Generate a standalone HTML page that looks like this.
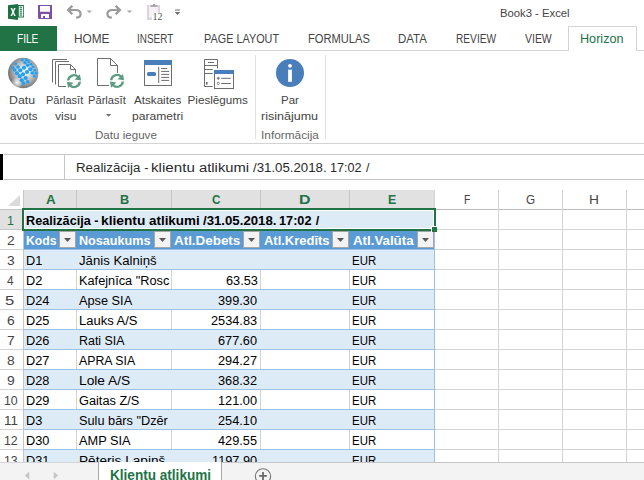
<!DOCTYPE html>
<html><head><meta charset="utf-8"><style>
*{margin:0;padding:0}
html,body{width:644px;height:480px;overflow:hidden;background:#fff}
body{position:relative;font-family:"Liberation Sans",sans-serif}
.a{position:absolute}
.tx{position:absolute;white-space:pre;transform-origin:0 0}
</style></head><body>
<div class="a" style="left:0px;top:26px;width:57px;height:25px;background:#217346;"></div><div class="a" style="left:57px;top:50px;width:587px;height:1px;background:#d4d4d4;"></div><div class="a" style="left:568px;top:26px;width:69px;height:25px;background:#fff;box-sizing:border-box;border:1px solid #d4d4d4;border-bottom:none"></div><div class="a" style="left:255px;top:55px;width:1px;height:84px;background:#e1e1e1;"></div><div class="a" style="left:325px;top:55px;width:1px;height:84px;background:#e1e1e1;"></div><div class="a" style="left:0px;top:143px;width:644px;height:1px;background:#d4d4d4;"></div><div class="a" style="left:4px;top:154px;width:640px;height:1px;background:#c6c6c6;"></div><div class="a" style="left:4px;top:179px;width:640px;height:1px;background:#c6c6c6;"></div><div class="a" style="left:0px;top:154px;width:3px;height:26px;background:#000;"></div><div class="a" style="left:64px;top:154px;width:1px;height:25px;background:#c6c6c6;"></div><div class="a" style="left:24px;top:190px;width:411px;height:18px;background:#e1e1e1;"></div><div class="a" style="left:435px;top:209px;width:209px;height:1px;background:#bcbcbc;"></div><div class="a" style="left:23px;top:190px;width:1px;height:18px;background:#c6c6c6;"></div><div class="a" style="left:76px;top:190px;width:1px;height:18px;background:#c6c6c6;"></div><div class="a" style="left:171px;top:190px;width:1px;height:18px;background:#c6c6c6;"></div><div class="a" style="left:260px;top:190px;width:1px;height:18px;background:#c6c6c6;"></div><div class="a" style="left:349px;top:190px;width:1px;height:18px;background:#c6c6c6;"></div><div class="a" style="left:434px;top:190px;width:1px;height:19px;background:#d4d4d4;"></div><div class="a" style="left:498px;top:190px;width:1px;height:19px;background:#d4d4d4;"></div><div class="a" style="left:562px;top:190px;width:1px;height:19px;background:#d4d4d4;"></div><div class="a" style="left:626px;top:190px;width:1px;height:19px;background:#d4d4d4;"></div><svg class="a" style="left:0;top:190px" width="23" height="19"><polygon points="8,16 20,16 20,5" fill="#dadada"/></svg><div class="a" style="left:0px;top:209px;width:22px;height:1px;background:#c6c6c6;"></div><div class="a" style="left:0px;top:210px;width:22px;height:19px;background:#e1e1e1;"></div><div class="a" style="left:0px;top:229px;width:22px;height:1px;background:#c6c6c6;"></div><div class="a" style="left:23px;top:231px;width:1px;height:231px;background:#c6c6c6;"></div><div class="a" style="left:0px;top:249px;width:23px;height:1px;background:#d4d4d4;"></div><div class="a" style="left:0px;top:269px;width:23px;height:1px;background:#d4d4d4;"></div><div class="a" style="left:0px;top:289px;width:23px;height:1px;background:#d4d4d4;"></div><div class="a" style="left:0px;top:309px;width:23px;height:1px;background:#d4d4d4;"></div><div class="a" style="left:0px;top:329px;width:23px;height:1px;background:#d4d4d4;"></div><div class="a" style="left:0px;top:349px;width:23px;height:1px;background:#d4d4d4;"></div><div class="a" style="left:0px;top:369px;width:23px;height:1px;background:#d4d4d4;"></div><div class="a" style="left:0px;top:389px;width:23px;height:1px;background:#d4d4d4;"></div><div class="a" style="left:0px;top:409px;width:23px;height:1px;background:#d4d4d4;"></div><div class="a" style="left:0px;top:429px;width:23px;height:1px;background:#d4d4d4;"></div><div class="a" style="left:0px;top:449px;width:23px;height:1px;background:#d4d4d4;"></div><div class="a" style="left:0px;top:469px;width:23px;height:1px;background:#d4d4d4;"></div><div class="a" style="left:435px;top:229px;width:209px;height:1px;background:#d4d4d4;"></div><div class="a" style="left:435px;top:249px;width:209px;height:1px;background:#d4d4d4;"></div><div class="a" style="left:435px;top:269px;width:209px;height:1px;background:#d4d4d4;"></div><div class="a" style="left:435px;top:289px;width:209px;height:1px;background:#d4d4d4;"></div><div class="a" style="left:435px;top:309px;width:209px;height:1px;background:#d4d4d4;"></div><div class="a" style="left:435px;top:329px;width:209px;height:1px;background:#d4d4d4;"></div><div class="a" style="left:435px;top:349px;width:209px;height:1px;background:#d4d4d4;"></div><div class="a" style="left:435px;top:369px;width:209px;height:1px;background:#d4d4d4;"></div><div class="a" style="left:435px;top:389px;width:209px;height:1px;background:#d4d4d4;"></div><div class="a" style="left:435px;top:409px;width:209px;height:1px;background:#d4d4d4;"></div><div class="a" style="left:435px;top:429px;width:209px;height:1px;background:#d4d4d4;"></div><div class="a" style="left:435px;top:449px;width:209px;height:1px;background:#d4d4d4;"></div><div class="a" style="left:435px;top:469px;width:209px;height:1px;background:#d4d4d4;"></div><div class="a" style="left:498px;top:209px;width:1px;height:253px;background:#d4d4d4;"></div><div class="a" style="left:562px;top:209px;width:1px;height:253px;background:#d4d4d4;"></div><div class="a" style="left:626px;top:209px;width:1px;height:253px;background:#d4d4d4;"></div><div class="a" style="left:24px;top:231px;width:410px;height:18px;background:#5b9bd5;"></div><div class="a" style="left:24px;top:249px;width:410px;height:1px;background:#9bc2e6;"></div><div class="a" style="left:24px;top:250px;width:410px;height:19px;background:#ddebf7;"></div><div class="a" style="left:24px;top:269px;width:410px;height:1px;background:#9bc2e6;"></div><div class="a" style="left:76px;top:270px;width:1px;height:19px;background:#d4d4d4;"></div><div class="a" style="left:171px;top:270px;width:1px;height:19px;background:#d4d4d4;"></div><div class="a" style="left:260px;top:270px;width:1px;height:19px;background:#d4d4d4;"></div><div class="a" style="left:349px;top:270px;width:1px;height:19px;background:#d4d4d4;"></div><div class="a" style="left:24px;top:289px;width:410px;height:1px;background:#9bc2e6;"></div><div class="a" style="left:24px;top:290px;width:410px;height:19px;background:#ddebf7;"></div><div class="a" style="left:24px;top:309px;width:410px;height:1px;background:#9bc2e6;"></div><div class="a" style="left:76px;top:310px;width:1px;height:19px;background:#d4d4d4;"></div><div class="a" style="left:171px;top:310px;width:1px;height:19px;background:#d4d4d4;"></div><div class="a" style="left:260px;top:310px;width:1px;height:19px;background:#d4d4d4;"></div><div class="a" style="left:349px;top:310px;width:1px;height:19px;background:#d4d4d4;"></div><div class="a" style="left:24px;top:329px;width:410px;height:1px;background:#9bc2e6;"></div><div class="a" style="left:24px;top:330px;width:410px;height:19px;background:#ddebf7;"></div><div class="a" style="left:24px;top:349px;width:410px;height:1px;background:#9bc2e6;"></div><div class="a" style="left:76px;top:350px;width:1px;height:19px;background:#d4d4d4;"></div><div class="a" style="left:171px;top:350px;width:1px;height:19px;background:#d4d4d4;"></div><div class="a" style="left:260px;top:350px;width:1px;height:19px;background:#d4d4d4;"></div><div class="a" style="left:349px;top:350px;width:1px;height:19px;background:#d4d4d4;"></div><div class="a" style="left:24px;top:369px;width:410px;height:1px;background:#9bc2e6;"></div><div class="a" style="left:24px;top:370px;width:410px;height:19px;background:#ddebf7;"></div><div class="a" style="left:24px;top:389px;width:410px;height:1px;background:#9bc2e6;"></div><div class="a" style="left:76px;top:390px;width:1px;height:19px;background:#d4d4d4;"></div><div class="a" style="left:171px;top:390px;width:1px;height:19px;background:#d4d4d4;"></div><div class="a" style="left:260px;top:390px;width:1px;height:19px;background:#d4d4d4;"></div><div class="a" style="left:349px;top:390px;width:1px;height:19px;background:#d4d4d4;"></div><div class="a" style="left:24px;top:409px;width:410px;height:1px;background:#9bc2e6;"></div><div class="a" style="left:24px;top:410px;width:410px;height:19px;background:#ddebf7;"></div><div class="a" style="left:24px;top:429px;width:410px;height:1px;background:#9bc2e6;"></div><div class="a" style="left:76px;top:430px;width:1px;height:19px;background:#d4d4d4;"></div><div class="a" style="left:171px;top:430px;width:1px;height:19px;background:#d4d4d4;"></div><div class="a" style="left:260px;top:430px;width:1px;height:19px;background:#d4d4d4;"></div><div class="a" style="left:349px;top:430px;width:1px;height:19px;background:#d4d4d4;"></div><div class="a" style="left:24px;top:449px;width:410px;height:1px;background:#9bc2e6;"></div><div class="a" style="left:24px;top:450px;width:410px;height:19px;background:#ddebf7;"></div><div class="a" style="left:24px;top:469px;width:410px;height:1px;background:#9bc2e6;"></div><div class="a" style="left:434px;top:231px;width:1px;height:231px;background:#9bc2e6;"></div><div class="a" style="left:59px;top:231px;width:15px;height:15px;background:#f3f3f3;border:1px solid #a6a6a6"></div><svg class="a" style="left:64px;top:238px" width="7" height="4"><polygon points="0,0 7,0 3.5,4" fill="#595959"/></svg><div class="a" style="left:154px;top:231px;width:15px;height:15px;background:#f3f3f3;border:1px solid #a6a6a6"></div><svg class="a" style="left:159px;top:238px" width="7" height="4"><polygon points="0,0 7,0 3.5,4" fill="#595959"/></svg><div class="a" style="left:243px;top:231px;width:15px;height:15px;background:#f3f3f3;border:1px solid #a6a6a6"></div><svg class="a" style="left:248px;top:238px" width="7" height="4"><polygon points="0,0 7,0 3.5,4" fill="#595959"/></svg><div class="a" style="left:332px;top:231px;width:15px;height:15px;background:#f3f3f3;border:1px solid #a6a6a6"></div><svg class="a" style="left:337px;top:238px" width="7" height="4"><polygon points="0,0 7,0 3.5,4" fill="#595959"/></svg><div class="a" style="left:417px;top:231px;width:15px;height:15px;background:#f3f3f3;border:1px solid #a6a6a6"></div><svg class="a" style="left:422px;top:238px" width="7" height="4"><polygon points="0,0 7,0 3.5,4" fill="#595959"/></svg><div class="a" style="left:22px;top:208px;width:414px;height:23px;background:#217346;"></div><div class="a" style="left:24px;top:210px;width:410px;height:19px;background:#fff;"></div><div class="a" style="left:25px;top:211px;width:408px;height:17px;background:#ddebf7;"></div><div class="a" style="left:431px;top:226px;width:6px;height:6px;background:#fff;"></div><div class="a" style="left:432px;top:227px;width:5px;height:5px;background:#217346;"></div>
<svg class="a" style="left:0;top:0" width="644" height="480"><polygon points="8,5.2 18,4 18,20 8,18.8" fill="#1e7145"/><rect x="18" y="5" width="6" height="12.5" fill="#1e7145"/><rect x="18.8" y="6" width="4.4" height="10.5" fill="#fff"/><rect x="19.6" y="6.7" width="2.5" height="1.1" fill="#1e7145"/><rect x="19.6" y="8.7" width="2.5" height="1.1" fill="#1e7145"/><rect x="19.6" y="10.6" width="2.5" height="1.1" fill="#1e7145"/><rect x="19.6" y="12.6" width="2.5" height="1.1" fill="#1e7145"/><rect x="19.6" y="14.5" width="2.5" height="1.1" fill="#1e7145"/><path d="M10.6,8.1 L12.2,8.1 L13.1,10.6 L14.0,8.1 L15.6,8.1 L13.9,12.0 L15.7,15.9 L14.1,15.9 L13.1,13.3 L12.1,15.9 L10.5,15.9 L12.3,12.0 Z" fill="#fff"/><path d="M38,5 H52 V19 H39 L38,18 Z M40,6 V11.8 H50 V6 Z M41,14 V18 H43 V16 H45 V18 H49 V14 Z" fill="#7e4fa8" fill-rule="evenodd"/><path d="M69.5,10 H75.5 C78.8,10 80.6,11.8 80.6,14 C80.6,16.2 78.8,17.6 76.2,17.6" fill="none" stroke="#9b9b9b" stroke-width="2.2"/><polygon points="66.5,10 71.5,5 73.2,6.6 69.8,10 73.2,13.4 71.5,15" fill="#9b9b9b"/><polygon points="86.5,10.5 92,10.5 89.25,13" fill="#a6a6a6"/><path d="M118.5,10 H112.5 C109.2,10 107.4,11.8 107.4,14 C107.4,16.2 109.2,17.6 111.8,17.6" fill="none" stroke="#9b9b9b" stroke-width="2.2"/><polygon points="121.5,10 116.5,5 114.8,6.6 118.2,10 114.8,13.4 116.5,15" fill="#9b9b9b"/><polygon points="126.8,10.5 132.2,10.5 129.5,13" fill="#a6a6a6"/><rect x="147" y="5" width="13" height="15" fill="#dcd4dc"/><rect x="149" y="6" width="9" height="11.5" fill="#f6f1f6"/><polygon points="150,6.8 151,5.2 152.8,5.2 153.4,4 154.6,4 155.2,5.2 157,5.2 158,6.8" fill="#9a9a9a"/><rect x="152" y="12.8" width="11" height="8" fill="#fff"/><text x="152.6" y="19.8" font-family="Liberation Serif" font-size="10" fill="#555">12</text><rect x="175" y="9.5" width="5" height="1" fill="#6d6d6d"/><polygon points="174.8,12 180.2,12 177.5,15" fill="#6d6d6d"/><defs>
<radialGradient id="gl" cx="0.55" cy="0.45" r="0.6">
 <stop offset="0" stop-color="#ffffff"/>
 <stop offset="0.25" stop-color="#e6e6e6"/>
 <stop offset="0.6" stop-color="#b0b0b0"/>
 <stop offset="0.88" stop-color="#7a7a7a"/>
 <stop offset="1" stop-color="#8e8e8e"/>
</radialGradient>
<radialGradient id="gl2" cx="0.3" cy="0.82" r="0.2">
 <stop offset="0" stop-color="#ffffff" stop-opacity="0.9"/>
 <stop offset="1" stop-color="#ffffff" stop-opacity="0"/>
</radialGradient>
<clipPath id="gc"><circle cx="23.2" cy="73" r="15.2"/></clipPath>
</defs><circle cx="23.2" cy="73" r="15.2" fill="url(#gl)"/><circle cx="23.2" cy="73" r="15.2" fill="url(#gl2)"/><ellipse cx="22.30" cy="60.00" rx="1.52" ry="1.45" fill="#22a2f4"/><ellipse cx="26.30" cy="59.70" rx="1.52" ry="1.45" fill="#22a2f4"/><ellipse cx="25.00" cy="62.70" rx="1.84" ry="1.75" fill="#22a2f4"/><ellipse cx="28.70" cy="61.70" rx="1.52" ry="1.45" fill="#22a2f4"/><ellipse cx="27.70" cy="65.30" rx="1.84" ry="1.75" fill="#22a2f4"/><ellipse cx="31.00" cy="64.30" rx="1.52" ry="1.45" fill="#22a2f4"/><ellipse cx="15.70" cy="64.00" rx="1.52" ry="1.45" fill="#22a2f4"/><ellipse cx="18.00" cy="67.00" rx="1.84" ry="1.75" fill="#22a2f4"/><ellipse cx="12.70" cy="67.70" rx="1.52" ry="1.45" fill="#22a2f4"/><ellipse cx="24.00" cy="67.70" rx="2.10" ry="2.00" fill="#22a2f4"/><ellipse cx="33.00" cy="67.00" rx="1.52" ry="1.45" fill="#22a2f4"/><ellipse cx="30.30" cy="69.30" rx="2.10" ry="2.00" fill="#22a2f4"/><ellipse cx="34.70" cy="70.30" rx="1.52" ry="1.45" fill="#22a2f4"/><ellipse cx="14.70" cy="70.00" rx="1.84" ry="1.75" fill="#22a2f4"/><ellipse cx="20.30" cy="70.30" rx="2.10" ry="2.00" fill="#22a2f4"/><ellipse cx="27.00" cy="72.00" rx="2.10" ry="2.00" fill="#22a2f4"/><ellipse cx="32.30" cy="73.00" rx="1.84" ry="1.75" fill="#22a2f4"/><ellipse cx="36.00" cy="73.30" rx="1.52" ry="1.45" fill="#22a2f4"/><ellipse cx="17.00" cy="73.30" rx="2.10" ry="2.00" fill="#22a2f4"/><ellipse cx="23.00" cy="74.30" rx="2.10" ry="2.00" fill="#22a2f4"/><ellipse cx="34.30" cy="76.30" rx="1.52" ry="1.45" fill="#22a2f4"/><ellipse cx="19.70" cy="76.30" rx="2.10" ry="2.00" fill="#22a2f4"/><ellipse cx="25.70" cy="78.00" rx="2.10" ry="2.00" fill="#22a2f4"/><ellipse cx="21.70" cy="80.30" rx="2.10" ry="2.00" fill="#22a2f4"/><ellipse cx="27.70" cy="81.70" rx="1.84" ry="1.75" fill="#22a2f4"/><ellipse cx="23.30" cy="83.30" rx="1.84" ry="1.75" fill="#22a2f4"/><path d="M52.5,82.5 V59.5 H67" fill="none" stroke="#6d6d6d" stroke-width="1"/><path d="M55.5,84.5 V61.5 H69" fill="none" stroke="#6d6d6d" stroke-width="1"/><path d="M66,86.5 H58.5 V64.5 H70.5 L75.5,69.5 V74" fill="#fff" stroke="#6d6d6d" stroke-width="1"/><path d="M70.5,64.5 V69.5 H75.5" fill="none" stroke="#6d6d6d" stroke-width="1"/><circle cx="74" cy="81.3" r="8" fill="#fff"/><g transform="translate(74,81.2)"><path d="M-7,-0.6 A7,7 0 0 1 5.0,-4.9 L3.3,-3.4 A4.6,4.6 0 0 0 -4.6,-0.6 Z M5.9,-6.9 L7.1,-0.6 L0.6,-1.6 Z" fill="#5c9c84"/><g transform="rotate(180)"><path d="M-7,-0.6 A7,7 0 0 1 5.0,-4.9 L3.3,-3.4 A4.6,4.6 0 0 0 -4.6,-0.6 Z M5.9,-6.9 L7.1,-0.6 L0.6,-1.6 Z" fill="#5c9c84"/></g></g><path d="M109,85.5 H97.5 V58.5 H110.5 L117.5,65.5 V73" fill="#fff" stroke="#6d6d6d" stroke-width="1"/><path d="M110.5,58.5 V65.5 H117.5" fill="none" stroke="#6d6d6d" stroke-width="1"/><circle cx="117" cy="80.8" r="8" fill="#fff"/><g transform="translate(117,80.9)"><path d="M-7,-0.6 A7,7 0 0 1 5.0,-4.9 L3.3,-3.4 A4.6,4.6 0 0 0 -4.6,-0.6 Z M5.9,-6.9 L7.1,-0.6 L0.6,-1.6 Z" fill="#5c9c84"/><g transform="rotate(180)"><path d="M-7,-0.6 A7,7 0 0 1 5.0,-4.9 L3.3,-3.4 A4.6,4.6 0 0 0 -4.6,-0.6 Z M5.9,-6.9 L7.1,-0.6 L0.6,-1.6 Z" fill="#5c9c84"/></g></g><polygon points="106,114 111.2,114 108.6,116.8" fill="#6d6d6d"/><rect x="144.5" y="60.5" width="27" height="25" fill="#fff" stroke="#6d6d6d" stroke-width="1"/><rect x="144" y="60" width="28" height="5" fill="#4a7ebb"/><rect x="147" y="72" width="9" height="4" rx="1.5" fill="#4a7ebb"/><rect x="158.2" y="67" width="1" height="16" fill="#6d6d6d"/><rect x="161.2" y="68.0" width="6" height="1" fill="#6d6d6d"/><rect x="161.2" y="70.9" width="8" height="1" fill="#6d6d6d"/><rect x="161.2" y="73.9" width="8" height="1" fill="#6d6d6d"/><rect x="161.2" y="76.9" width="8" height="1" fill="#6d6d6d"/><rect x="161.2" y="79.9" width="8" height="1" fill="#6d6d6d"/><path d="M212.7,86.5 H204.5 V59.5 H217.5 V68.5" fill="none" stroke="#6d6d6d" stroke-width="1"/><rect x="204.5" y="65" width="13" height="1" fill="#6d6d6d"/><rect x="208" y="62" width="6" height="1" fill="#6d6d6d"/><rect x="204.5" y="69" width="8.2" height="1" fill="#6d6d6d"/><rect x="204.5" y="73" width="8.2" height="1" fill="#6d6d6d"/><rect x="206" y="82" width="1.6" height="2.6" fill="#6d6d6d"/><rect x="214.5" y="70.5" width="19" height="18" fill="#fff" stroke="#6d6d6d" stroke-width="1"/><rect x="214" y="70" width="20" height="4" fill="#4a7ebb"/><circle cx="218.3" cy="78.3" r="1.1" fill="#888" stroke="#6d6d6d" stroke-width="0.6"/><circle cx="218.3" cy="83.4" r="1.1" fill="#fff" stroke="#6d6d6d" stroke-width="0.8"/><rect x="221.2" y="77.8" width="9.6" height="1" fill="#6d6d6d"/><rect x="221.2" y="83" width="9.6" height="1" fill="#6d6d6d"/><circle cx="290" cy="73" r="14" fill="#4a7ebb"/><circle cx="290" cy="65.8" r="1.9" fill="#fff"/><rect x="288.1" y="69.6" width="3.8" height="12.2" fill="#fff"/></svg>
<div class="tx" style="left:499.94px;top:6.80px;font-size:11.7px;line-height:11.7px;color:#444;transform:scaleX(0.9648);">Book3 - Excel</div>
<div class="tx" style="left:16.99px;top:33.10px;font-size:12.5px;line-height:12.5px;color:#fff;transform:scaleX(0.8080);">FILE</div>
<div class="tx" style="left:73.76px;top:33.00px;font-size:12.5px;line-height:12.5px;color:#444;transform:scaleX(0.9444);">HOME</div>
<div class="tx" style="left:137.21px;top:33.00px;font-size:12.5px;line-height:12.5px;color:#444;transform:scaleX(0.7933);">INSERT</div>
<div class="tx" style="left:203.73px;top:33.00px;font-size:12.5px;line-height:12.5px;color:#444;transform:scaleX(0.8694);">PAGE LAYOUT</div>
<div class="tx" style="left:307.71px;top:33.00px;font-size:12.5px;line-height:12.5px;color:#444;transform:scaleX(0.8912);">FORMULAS</div>
<div class="tx" style="left:397.58px;top:33.00px;font-size:12.5px;line-height:12.5px;color:#444;transform:scaleX(0.9194);">DATA</div>
<div class="tx" style="left:455.89px;top:33.00px;font-size:12.5px;line-height:12.5px;color:#444;transform:scaleX(0.8125);">REVIEW</div>
<div class="tx" style="left:525.00px;top:33.00px;font-size:12.5px;line-height:12.5px;color:#444;transform:scaleX(0.8375);">VIEW</div>
<div class="tx" style="left:580.29px;top:33.00px;font-size:12.5px;line-height:12.5px;color:#217346;transform:scaleX(1.0098);">Horizon</div>
<div class="tx" style="left:9.45px;top:94.10px;font-size:11.7px;line-height:11.7px;color:#444;transform:scaleX(1.0522);">Datu</div>
<div class="tx" style="left:9.50px;top:109.70px;font-size:11.7px;line-height:11.7px;color:#444;transform:scaleX(0.9821);">avots</div>
<div class="tx" style="left:45.86px;top:94.10px;font-size:11.7px;line-height:11.7px;color:#444;transform:scaleX(0.9385);">Pārlasīt</div>
<div class="tx" style="left:54.90px;top:109.70px;font-size:11.7px;line-height:11.7px;color:#444;transform:scaleX(1.0400);">visu</div>
<div class="tx" style="left:88.45px;top:94.10px;font-size:11.7px;line-height:11.7px;color:#444;transform:scaleX(0.9538);">Pārlasīt</div>
<div class="tx" style="left:134.40px;top:94.10px;font-size:11.7px;line-height:11.7px;color:#444;transform:scaleX(0.9957);">Atskaites</div>
<div class="tx" style="left:131.96px;top:109.70px;font-size:11.7px;line-height:11.7px;color:#444;transform:scaleX(1.0354);">parametri</div>
<div class="tx" style="left:187.50px;top:94.10px;font-size:11.7px;line-height:11.7px;color:#444;">Pieslēgums</div>
<div class="tx" style="left:281.32px;top:94.40px;font-size:11.7px;line-height:11.7px;color:#444;transform:scaleX(0.9824);">Par</div>
<div class="tx" style="left:260.93px;top:109.70px;font-size:11.7px;line-height:11.7px;color:#444;transform:scaleX(1.0712);">risinājumu</div>
<div class="tx" style="left:94.91px;top:128.90px;font-size:11.7px;line-height:11.7px;color:#666;transform:scaleX(0.9918);">Datu ieguve</div>
<div class="tx" style="left:260.99px;top:128.70px;font-size:11.7px;line-height:11.7px;color:#666;transform:scaleX(1.0134);">Informācija</div>
<div class="tx" style="left:75.64px;top:161.80px;font-size:12.5px;line-height:12.5px;color:#2a2a2a;transform:scaleX(1.0633);">Realizācija</div>
<div class="tx" style="left:144.35px;top:161.80px;font-size:12.5px;line-height:12.5px;color:#2a2a2a;">-</div>
<div class="tx" style="left:151.49px;top:161.80px;font-size:12.5px;line-height:12.5px;color:#2a2a2a;transform:scaleX(1.2143);">klientu</div>
<div class="tx" style="left:199.30px;top:161.80px;font-size:12.5px;line-height:12.5px;color:#2a2a2a;transform:scaleX(1.1833);">atlikumi</div>
<div class="tx" style="left:252.70px;top:161.80px;font-size:12.5px;line-height:12.5px;color:#2a2a2a;transform:scaleX(1.0594);">/31.05.2018.</div>
<div class="tx" style="left:329.69px;top:161.80px;font-size:12.5px;line-height:12.5px;color:#2a2a2a;transform:scaleX(1.0100);">17:02</div>
<div class="tx" style="left:366.00px;top:161.80px;font-size:12.5px;line-height:12.5px;color:#2a2a2a;">/</div>
<div class="tx" style="left:45.80px;top:194.00px;font-size:12px;line-height:12px;color:#217346;font-weight:700;transform:scaleX(1.1125);">A</div>
<div class="tx" style="left:119.54px;top:194.00px;font-size:12px;line-height:12px;color:#217346;font-weight:700;transform:scaleX(1.0571);">B</div>
<div class="tx" style="left:212.20px;top:194.00px;font-size:12px;line-height:12px;color:#217346;font-weight:700;transform:scaleX(0.9750);">C</div>
<div class="tx" style="left:298.97px;top:194.00px;font-size:12px;line-height:12px;color:#217346;font-weight:700;transform:scaleX(1.3286);">D</div>
<div class="tx" style="left:387.77px;top:194.00px;font-size:12px;line-height:12px;color:#217346;font-weight:700;transform:scaleX(1.0286);">E</div>
<div class="tx" style="left:463.63px;top:194.00px;font-size:12px;line-height:12px;color:#444;transform:scaleX(0.8667);">F</div>
<div class="tx" style="left:526.00px;top:194.00px;font-size:12px;line-height:12px;color:#444;transform:scaleX(0.9778);">G</div>
<div class="tx" style="left:589.26px;top:194.00px;font-size:12px;line-height:12px;color:#444;transform:scaleX(1.1429);">H</div>
<div class="tx" style="left:6.76px;top:214.50px;font-size:12px;line-height:12px;color:#217346;transform:scaleX(1.0400);">1</div>
<div class="tx" style="left:6.70px;top:235.10px;font-size:12px;line-height:12px;color:#444;transform:scaleX(1.1500);">2</div>
<div class="tx" style="left:6.70px;top:255.10px;font-size:12px;line-height:12px;color:#444;transform:scaleX(1.1500);">3</div>
<div class="tx" style="left:6.70px;top:275.10px;font-size:12px;line-height:12px;color:#444;transform:scaleX(0.9857);">4</div>
<div class="tx" style="left:5.32px;top:295.10px;font-size:12px;line-height:12px;color:#444;transform:scaleX(1.3800);">5</div>
<div class="tx" style="left:6.70px;top:315.10px;font-size:12px;line-height:12px;color:#444;transform:scaleX(1.1500);">6</div>
<div class="tx" style="left:6.70px;top:335.10px;font-size:12px;line-height:12px;color:#444;transform:scaleX(1.1500);">7</div>
<div class="tx" style="left:6.70px;top:355.10px;font-size:12px;line-height:12px;color:#444;transform:scaleX(1.1500);">8</div>
<div class="tx" style="left:6.70px;top:375.10px;font-size:12px;line-height:12px;color:#444;transform:scaleX(1.1500);">9</div>
<div class="tx" style="left:4.17px;top:395.10px;font-size:12px;line-height:12px;color:#444;transform:scaleX(1.0250);">10</div>
<div class="tx" style="left:4.08px;top:415.10px;font-size:12px;line-height:12px;color:#444;transform:scaleX(1.1182);">11</div>
<div class="tx" style="left:4.17px;top:435.10px;font-size:12px;line-height:12px;color:#444;transform:scaleX(1.0250);">12</div>
<div class="tx" style="left:4.17px;top:455.10px;font-size:12px;line-height:12px;color:#444;transform:scaleX(1.0250);">13</div>
<div class="tx" style="left:25.69px;top:214.50px;font-size:12.5px;line-height:12.5px;color:#000;font-weight:700;transform:scaleX(1.0127);">Realizācija</div>
<div class="tx" style="left:94.25px;top:214.50px;font-size:12.5px;line-height:12.5px;color:#000;font-weight:700;">-</div>
<div class="tx" style="left:101.20px;top:214.50px;font-size:12.5px;line-height:12.5px;color:#000;font-weight:700;transform:scaleX(1.1000);">klientu</div>
<div class="tx" style="left:149.00px;top:214.50px;font-size:12.5px;line-height:12.5px;color:#000;font-weight:700;transform:scaleX(1.0723);">atlikumi</div>
<div class="tx" style="left:203.10px;top:214.50px;font-size:12.5px;line-height:12.5px;color:#000;font-weight:700;transform:scaleX(1.0565);">/31.05.2018.</div>
<div class="tx" style="left:279.38px;top:214.50px;font-size:12.5px;line-height:12.5px;color:#000;font-weight:700;transform:scaleX(1.0161);">17:02</div>
<div class="tx" style="left:315.85px;top:214.50px;font-size:12.5px;line-height:12.5px;color:#000;font-weight:700;">/</div>
<div class="tx" style="left:25.83px;top:234.60px;font-size:12.5px;line-height:12.5px;color:#fff;font-weight:700;transform:scaleX(0.9733);">Kods</div>
<div class="tx" style="left:78.89px;top:234.60px;font-size:12.5px;line-height:12.5px;color:#fff;font-weight:700;transform:scaleX(1.0100);">Nosaukums</div>
<div class="tx" style="left:174.40px;top:234.60px;font-size:12.5px;line-height:12.5px;color:#fff;font-weight:700;transform:scaleX(1.0721);">Atl.Debets</div>
<div class="tx" style="left:263.50px;top:234.60px;font-size:12.5px;line-height:12.5px;color:#fff;font-weight:700;transform:scaleX(1.0365);">Atl.Kredīts</div>
<div class="tx" style="left:352.70px;top:234.60px;font-size:12.5px;line-height:12.5px;color:#fff;font-weight:700;transform:scaleX(1.0632);">Atl.Valūta</div>
<div class="tx" style="left:25.60px;top:255.40px;font-size:12.5px;line-height:12.5px;color:#000;transform:scaleX(1.0200);">D1</div>
<div class="a" style="left:77px;top:249px;width:183px;height:20px;overflow:hidden"><div style="position:relative;left:-77px;top:-249px"><div class="tx" style="left:78.70px;top:255.40px;font-size:12.5px;line-height:12.5px;color:#000;transform:scaleX(1.0550);">Jānis Kalniņš</div></div></div>
<div class="tx" style="left:351.70px;top:255.40px;font-size:12.5px;line-height:12.5px;color:#000;transform:scaleX(0.9150);">EUR</div>
<div class="tx" style="left:25.60px;top:275.40px;font-size:12.5px;line-height:12.5px;color:#000;transform:scaleX(1.0200);">D2</div>
<div class="a" style="left:77px;top:269px;width:94px;height:20px;overflow:hidden"><div style="position:relative;left:-77px;top:-269px"><div class="tx" style="left:78.70px;top:275.40px;font-size:12.5px;line-height:12.5px;color:#000;transform:scaleX(1.0200);">Kafejnīca &quot;Rosc</div></div></div>
<div class="tx" style="left:225.58px;top:275.40px;font-size:12.5px;line-height:12.5px;color:#000;transform:scaleX(1.0200);">63.53</div>
<div class="tx" style="left:351.70px;top:275.40px;font-size:12.5px;line-height:12.5px;color:#000;transform:scaleX(0.9150);">EUR</div>
<div class="tx" style="left:25.60px;top:295.40px;font-size:12.5px;line-height:12.5px;color:#000;transform:scaleX(1.0200);">D24</div>
<div class="a" style="left:77px;top:289px;width:94px;height:20px;overflow:hidden"><div style="position:relative;left:-77px;top:-289px"><div class="tx" style="left:78.70px;top:295.40px;font-size:12.5px;line-height:12.5px;color:#000;transform:scaleX(1.0200);">Apse SIA</div></div></div>
<div class="tx" style="left:218.44px;top:295.40px;font-size:12.5px;line-height:12.5px;color:#000;transform:scaleX(1.0200);">399.30</div>
<div class="tx" style="left:351.70px;top:295.40px;font-size:12.5px;line-height:12.5px;color:#000;transform:scaleX(0.9150);">EUR</div>
<div class="tx" style="left:25.60px;top:315.40px;font-size:12.5px;line-height:12.5px;color:#000;transform:scaleX(1.0200);">D25</div>
<div class="a" style="left:77px;top:309px;width:94px;height:20px;overflow:hidden"><div style="position:relative;left:-77px;top:-309px"><div class="tx" style="left:78.70px;top:315.40px;font-size:12.5px;line-height:12.5px;color:#000;transform:scaleX(1.0400);">Lauks A/S</div></div></div>
<div class="tx" style="left:211.30px;top:315.40px;font-size:12.5px;line-height:12.5px;color:#000;transform:scaleX(1.0200);">2534.83</div>
<div class="tx" style="left:351.70px;top:315.40px;font-size:12.5px;line-height:12.5px;color:#000;transform:scaleX(0.9150);">EUR</div>
<div class="tx" style="left:25.60px;top:335.40px;font-size:12.5px;line-height:12.5px;color:#000;transform:scaleX(1.0200);">D26</div>
<div class="a" style="left:77px;top:329px;width:94px;height:20px;overflow:hidden"><div style="position:relative;left:-77px;top:-329px"><div class="tx" style="left:78.70px;top:335.40px;font-size:12.5px;line-height:12.5px;color:#000;transform:scaleX(0.9950);">Rati SIA</div></div></div>
<div class="tx" style="left:218.44px;top:335.40px;font-size:12.5px;line-height:12.5px;color:#000;transform:scaleX(1.0200);">677.60</div>
<div class="tx" style="left:351.70px;top:335.40px;font-size:12.5px;line-height:12.5px;color:#000;transform:scaleX(0.9150);">EUR</div>
<div class="tx" style="left:25.60px;top:355.40px;font-size:12.5px;line-height:12.5px;color:#000;transform:scaleX(1.0200);">D27</div>
<div class="a" style="left:77px;top:349px;width:94px;height:20px;overflow:hidden"><div style="position:relative;left:-77px;top:-349px"><div class="tx" style="left:78.70px;top:355.40px;font-size:12.5px;line-height:12.5px;color:#000;transform:scaleX(0.9850);">APRA SIA</div></div></div>
<div class="tx" style="left:218.44px;top:355.40px;font-size:12.5px;line-height:12.5px;color:#000;transform:scaleX(1.0200);">294.27</div>
<div class="tx" style="left:351.70px;top:355.40px;font-size:12.5px;line-height:12.5px;color:#000;transform:scaleX(0.9150);">EUR</div>
<div class="tx" style="left:25.60px;top:375.40px;font-size:12.5px;line-height:12.5px;color:#000;transform:scaleX(1.0200);">D28</div>
<div class="a" style="left:77px;top:369px;width:94px;height:20px;overflow:hidden"><div style="position:relative;left:-77px;top:-369px"><div class="tx" style="left:78.70px;top:375.40px;font-size:12.5px;line-height:12.5px;color:#000;transform:scaleX(1.1000);">Lole A/S</div></div></div>
<div class="tx" style="left:218.44px;top:375.40px;font-size:12.5px;line-height:12.5px;color:#000;transform:scaleX(1.0200);">368.32</div>
<div class="tx" style="left:351.70px;top:375.40px;font-size:12.5px;line-height:12.5px;color:#000;transform:scaleX(0.9150);">EUR</div>
<div class="tx" style="left:25.60px;top:395.40px;font-size:12.5px;line-height:12.5px;color:#000;transform:scaleX(1.0200);">D29</div>
<div class="a" style="left:77px;top:389px;width:94px;height:20px;overflow:hidden"><div style="position:relative;left:-77px;top:-389px"><div class="tx" style="left:78.70px;top:395.40px;font-size:12.5px;line-height:12.5px;color:#000;transform:scaleX(1.0200);">Gaitas Z/S</div></div></div>
<div class="tx" style="left:218.44px;top:395.40px;font-size:12.5px;line-height:12.5px;color:#000;transform:scaleX(1.0200);">121.00</div>
<div class="tx" style="left:351.70px;top:395.40px;font-size:12.5px;line-height:12.5px;color:#000;transform:scaleX(0.9150);">EUR</div>
<div class="tx" style="left:25.60px;top:415.40px;font-size:12.5px;line-height:12.5px;color:#000;transform:scaleX(1.0200);">D3</div>
<div class="a" style="left:77px;top:409px;width:94px;height:20px;overflow:hidden"><div style="position:relative;left:-77px;top:-409px"><div class="tx" style="left:78.70px;top:415.40px;font-size:12.5px;line-height:12.5px;color:#000;transform:scaleX(1.0200);">Sulu bārs &quot;Dzēr</div></div></div>
<div class="tx" style="left:218.44px;top:415.40px;font-size:12.5px;line-height:12.5px;color:#000;transform:scaleX(1.0200);">254.10</div>
<div class="tx" style="left:351.70px;top:415.40px;font-size:12.5px;line-height:12.5px;color:#000;transform:scaleX(0.9150);">EUR</div>
<div class="tx" style="left:25.60px;top:435.40px;font-size:12.5px;line-height:12.5px;color:#000;transform:scaleX(1.0200);">D30</div>
<div class="a" style="left:77px;top:429px;width:94px;height:20px;overflow:hidden"><div style="position:relative;left:-77px;top:-429px"><div class="tx" style="left:78.70px;top:435.40px;font-size:12.5px;line-height:12.5px;color:#000;transform:scaleX(1.0200);">AMP SIA</div></div></div>
<div class="tx" style="left:218.44px;top:435.40px;font-size:12.5px;line-height:12.5px;color:#000;transform:scaleX(1.0200);">429.55</div>
<div class="tx" style="left:351.70px;top:435.40px;font-size:12.5px;line-height:12.5px;color:#000;transform:scaleX(0.9150);">EUR</div>
<div class="tx" style="left:25.60px;top:455.40px;font-size:12.5px;line-height:12.5px;color:#000;transform:scaleX(1.0200);">D31</div>
<div class="a" style="left:77px;top:449px;width:94px;height:20px;overflow:hidden"><div style="position:relative;left:-77px;top:-449px"><div class="tx" style="left:78.70px;top:455.40px;font-size:12.5px;line-height:12.5px;color:#000;transform:scaleX(1.0900);">Pēteris Lapiņš</div></div></div>
<div class="tx" style="left:212.32px;top:455.40px;font-size:12.5px;line-height:12.5px;color:#000;transform:scaleX(1.0200);">1197.90</div>
<div class="tx" style="left:351.70px;top:455.40px;font-size:12.5px;line-height:12.5px;color:#000;transform:scaleX(0.9150);">EUR</div>
<div class="a" style="left:0px;top:462px;width:644px;height:18px;background:#f3f3f3;"></div><div class="a" style="left:0px;top:462px;width:98px;height:1px;background:#d4d4d4;"></div><div class="a" style="left:221px;top:462px;width:423px;height:1px;background:#c6c6c6;"></div><div class="a" style="left:98px;top:462px;width:1px;height:18px;background:#a6a6a6;"></div><div class="a" style="left:221px;top:462px;width:1px;height:18px;background:#a6a6a6;"></div><div class="a" style="left:99px;top:462px;width:122px;height:18px;background:#fff;"></div>
<div class="tx" style="left:110.03px;top:468.30px;font-size:14px;line-height:14px;color:#217346;font-weight:700;transform:scaleX(0.9696);">Klientu atlikumi</div>
<svg class="a" style="left:0;top:0" width="644" height="480"><polygon points="29.3,471.8 24.8,475.6 29.3,479.4" fill="#c6c6c6"/><polygon points="53.7,471.8 58.2,475.6 53.7,479.4" fill="#c6c6c6"/><circle cx="263" cy="476.3" r="7.6" fill="none" stroke="#777" stroke-width="1.1"/><rect x="262.1" y="472" width="1.8" height="9" fill="#6a6a6a"/><rect x="259.2" y="475" width="7.6" height="1.8" fill="#6a6a6a"/></svg>
</body></html>
